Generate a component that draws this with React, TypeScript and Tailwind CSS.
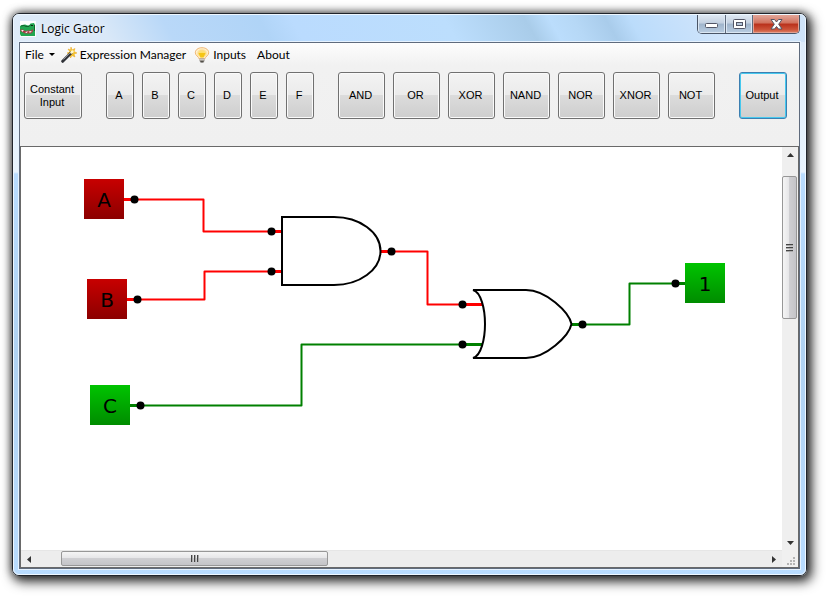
import React from "react";

const inputs = ["A", "B", "C", "D", "E", "F"];
const gates = ["AND", "OR", "XOR", "NAND", "NOR", "XNOR", "NOT"];

function GatorIcon() {
  return (
    <svg width="16" height="16" viewBox="0 0 16 16" className="shrink-0" aria-hidden="true">
      <rect width="16" height="16" fill="#fdfdfd" />
      <path d="M0 5 2 4 5 3.500 8 4.500 9.500 4 10.500 2.500 14 2 15 4V15H1L0 13Z" fill="#22a650" />
      <path d="M1 5 4 4.500 6 5.500 9 5.500 11 3.500M14.500 4V10" stroke="#12602c" fill="none" />
      <path d="M0 8.500 3 8.500 5 10 8 9.500 11 9.500 13 8V10.500L11 12.500 5 12.500 1 10.500Z" fill="#a83c48" />
      <path d="M1.500 9l1 1.500 1-1.500M5.500 11l1 1 1-1.500M9 10.500l1 1 1.500-1.500" fill="#fff" stroke="#fff" strokeWidth=".5" />
      <rect x="11" y="4" width="2" height="1" fill="#0b2a14" />
    </svg>
  );
}

function WandIcon() {
  return (
    <svg width="16" height="16" viewBox="0 0 16 16" className="shrink-0" aria-hidden="true">
      <path d="M10 0 11 3 14 1.500 13 4.500 16 6 13 7 14 10 11 8.500 9.500 11 9 7.500 6 6 9 5 7 2 9.500 3Z" fill="#f6c52c" stroke="#e9a51b" strokeWidth=".5" />
      <path d="M10.500 5.500 1.700 14.300" stroke="#303238" strokeWidth="3" strokeLinecap="round" />
      <path d="M9.500 5.500 2.500 12.500" stroke="#8d929c" strokeWidth="1" />
      <path d="M11.500 4.500 10.500 5.500" stroke="#fff6c9" strokeWidth="2.500" strokeLinecap="round" />
    </svg>
  );
}

function BulbIcon() {
  return (
    <svg width="16" height="16" viewBox="0 0 16 16" className="shrink-0" aria-hidden="true">
      <defs>
        <radialGradient id="bulb" cx=".5" cy=".5" r=".6">
          <stop offset="0" stopColor="#ffe35a" />
          <stop offset=".45" stopColor="#fddc85" />
          <stop offset=".75" stopColor="#fff3d8" />
          <stop offset="1" stopColor="#f4bd78" />
        </radialGradient>
      </defs>
      <path d="M8 .7C3.800.7 1.300 3 1.300 5.800 1.300 8.500 4.500 9.500 5.300 12H10.700C11.500 9.500 14.700 8.500 14.700 5.800 14.700 3 12.200.7 8 .7Z" fill="url(#bulb)" stroke="#efb36c" strokeWidth=".9" />
      <path d="M4.500 6H11.500L9.500 10.500H6.500Z" fill="#f5c514" />
      <path d="M5.500 11.500H10.500V14L9.300 15.500H6.700L5.500 14Z" fill="#8f8c86" />
      <path d="M5.500 12.700H10.500" stroke="#d8d5cf" />
      <path d="M6.500 14.800H9.500" stroke="#37352f" />
    </svg>
  );
}

function WindowButtons() {
  const plain =
    "flex h-full items-center justify-center bg-[linear-gradient(#dfe8f2,#c3d0e0_45%,#9fb4cb_50%,#b9cde2)] shadow-[inset_0_0_0_1px_#dbe7f3]";
  return (
    <div className="flex h-[19px] w-[103px] shrink-0 overflow-hidden rounded-b-[5px] border border-t-0 border-[#4a5567]">
      <button aria-label="Minimize" className={plain + " w-7 border-r border-[#5f6b7d] pt-1"}>
        <svg width="13" height="6" aria-hidden="true">
          <rect x=".5" y=".5" width="12" height="4" rx="1" fill="#fff" stroke="#535666" />
        </svg>
      </button>
      <button aria-label="Maximize" className={plain + " w-[27px] border-r border-[#5f6b7d]"}>
        <svg width="13" height="11" aria-hidden="true">
          <rect x=".5" y=".5" width="12" height="9" rx="1" fill="#fff" stroke="#535666" />
          <rect x="3.500" y="3.500" width="6" height="3" fill="#b5c6da" stroke="#535666" />
        </svg>
      </button>
      <button
        aria-label="Close"
        className="flex h-full flex-1 items-center justify-center bg-[linear-gradient(#e3a89b,#d0705c_45%,#b9301b_50%,#cc5238_80%,#dd8468)] shadow-[inset_0_0_0_1px_#e3a192]"
      >
        <svg width="13" height="11" viewBox="0 0 13 11" aria-hidden="true">
          <path d="M1 .5H4.500L6.500 3 8.500.5H12L8.700 5.200 12 10H8.500L6.500 7.500 4.500 10H1L4.300 5.200Z" fill="#fff" stroke="#535666" strokeWidth="1" />
        </svg>
      </button>
    </div>
  );
}

function ToolButton({ children, size, focused = false }: { children: React.ReactNode; size: string; focused?: boolean }) {
  const edge = focused
    ? "border-[#3c7fb1] shadow-[inset_0_0_0_1px_#46c8ee]"
    : "border-[#707070] shadow-[inset_0_0_0_1px_#fafafa]";
  return (
    <button
      className={
        "h-[47px] shrink-0 rounded-[3px] border bg-[linear-gradient(#f3f3f3,#ebebeb_48%,#dcdcdc_48%,#cecece)] pr-0.5 text-center text-[11px] leading-[13px] " +
        size + " " + edge
      }
    >
      {children}
    </button>
  );
}

function Node({ x, y, on, label }: { x: number; y: number; on: boolean; label: string }) {
  return (
    <g>
      <rect x={x} y={y} width="40" height="40" fill={on ? "url(#green)" : "url(#red)"} />
      <text x={x + 20} y={y + 28} textAnchor="middle" fontSize="20" fontFamily="'DejaVu Sans', sans-serif">
        {label}
      </text>
    </g>
  );
}

const RED = "#ff0000";
const GREEN = "#008000";

const wires = [
  { d: "M113.500 52.500H182.500V84.500H250.500", c: RED },
  { d: "M116.500 152.500H183.500V124.500H250.500", c: RED },
  { d: "M370.500 104.500H406.500V157.500H441.500", c: RED },
  { d: "M119.500 258.500H280.500V197.500H441.500", c: GREEN },
  { d: "M561.500 177.500H608.500V136.500H654.500", c: GREEN },
];

const stubs = [
  { d: "M103 52.500H113M106 152.500H116M250 84.500H261M250 124.500H261M360 104.500H370M441 157.500H462", c: RED },
  { d: "M109 258.500H119M441 197.500H462M551 177.500H561M654 136.500H664", c: GREEN },
];

const dots = [
  [113.5, 52.5], [116.5, 152.5], [119.5, 258.5], [250.5, 84.5], [250.5, 124.5],
  [370.5, 104.5], [441.5, 157.5], [441.5, 197.5], [561.5, 177.5], [654.5, 136.5],
];

function Circuit() {
  return (
    <svg className="block h-full min-h-0 w-full" role="img" aria-label="Logic circuit">
      <defs>
        <linearGradient id="red" x2="0" y2="1">
          <stop stopColor="#c80000" />
          <stop offset="1" stopColor="#8c0000" />
        </linearGradient>
        <linearGradient id="green" x2="0" y2="1">
          <stop stopColor="#00c400" />
          <stop offset="1" stopColor="#008c00" />
        </linearGradient>
      </defs>
      {wires.map((w) => (
        <path key={w.d} d={w.d} stroke={w.c} strokeWidth="2" strokeLinejoin="round" fill="none" />
      ))}
      {stubs.map((s) => (
        <path key={s.d} d={s.d} stroke={s.c} strokeWidth="3" fill="none" />
      ))}
      {dots.map(([x, y]) => (
        <circle key={x + "," + y} cx={x} cy={y} r="4" />
      ))}
      <path d="M261 70H313A46.500 34 0 0 1 313 138H261Z" fill="#fff" stroke="#000" strokeWidth="2" />
      <path
        d="M452 143H505C525 143 548 165 550.500 177 548 189 525 211 505 211H452C460 209 464 192 464 177S460 145 452 143Z"
        fill="#fff"
        stroke="#000"
        strokeWidth="2"
        strokeLinejoin="bevel"
      />
      <Node x={63} y={32} on={false} label="A" />
      <Node x={66} y={132} on={false} label="B" />
      <Node x={69} y={238} on label="C" />
      <Node x={664} y={116} on label="1" />
    </svg>
  );
}

function Arrow({ points, label }: { points: string; label: string }) {
  return (
    <button aria-label={label} className="flex size-4 shrink-0 items-center justify-center">
      <svg width="7" height="7" aria-hidden="true">
        <polygon points={points} fill="#333" />
      </svg>
    </button>
  );
}

export default function App() {
  return (
    <div className="flex h-screen min-h-[400px] flex-col bg-white pt-[13px] pr-[22px] pb-5 pl-3 font-['Liberation_Sans',Arial,sans-serif] text-black">
      <div className="flex min-h-0 flex-1 flex-col rounded-[7px] border border-[#20242b] bg-[linear-gradient(#dbeaf9,#e9f4fe_158px,#b9dcff_160px,#b0d2f2_60%,#b9dcff)] shadow-[0_0_8px_rgba(0,0,0,0.6),3px_4px_12px_2px_rgba(0,0,0,0.75)]">
        <div className="flex min-h-0 flex-1 flex-col rounded-[6px] border border-[#eef7ff] px-[5px] pb-[5px]">
          <header className="-mx-[5px] flex h-[27px] shrink-0 items-start rounded-t-[5px] bg-[linear-gradient(60deg,#dfebf8_0%,#d9e8f8_12%,#b9d8f8_20%,#b0d4f7_32%,#badbfe_36%,#bcdefd_55%,#a9cce9_65%,#bbddfc_68%,#b6d8f6_71%,#a9cceb_75%,#bbdcfb_78%,#cfe4fb_88%,#cfe3f8_100%)] pr-[5px] pl-1.5">
            <div className="flex flex-1 items-center gap-[5px] pt-[6px]">
              <GatorIcon />
              <h1 className="font-['Open_Sans','Noto_Sans',sans-serif] text-[12px] leading-4 text-shadow-[0_0_8px_#ffffff]">Logic Gator</h1>
            </div>
            <WindowButtons />
          </header>

          <main className="flex min-h-0 flex-1 flex-col border border-[#5f6b7d] bg-[#f0f0f0] outline outline-[#e6f2fe]">
            <nav className="flex h-[23px] shrink-0 items-center bg-[linear-gradient(#fdfdfd,#f1f1f1)] pl-[5px] font-[Lato,'Noto_Sans',sans-serif] text-[12px] leading-4">
              <button className="flex items-center gap-[5px]">
                File
                <svg width="6" height="3" viewBox="0 0 6 3" aria-hidden="true">
                  <path d="M0 0H6L3 3Z" />
                </svg>
              </button>
              <button className="ml-1.5 flex items-center gap-[3px]">
                <WandIcon />
                Expression Manager
              </button>
              <button className="ml-2 flex items-center gap-[3px]">
                <BulbIcon />
                Inputs
              </button>
              <button className="ml-[11px]">About</button>
            </nav>

            <div className="flex h-20 shrink-0 gap-6 overflow-hidden bg-[linear-gradient(#f1f1f1,#f0f0f0)] pt-1.5 pl-1">
              <ToolButton size="w-[58px]">
                Constant
                <br />
                Input
              </ToolButton>
              <div className="flex gap-2">
                {inputs.map((name) => (
                  <ToolButton key={name} size="w-7">
                    {name}
                  </ToolButton>
                ))}
              </div>
              <div className="flex gap-2">
                {gates.map((name) => (
                  <ToolButton key={name} size="w-[47px]">
                    {name}
                  </ToolButton>
                ))}
              </div>
              <ToolButton size="w-12" focused>
                Output
              </ToolButton>
            </div>

            <section className="grid min-h-0 flex-1 grid-cols-[minmax(0,1fr)_16px] grid-rows-[minmax(0,1fr)_17px] border border-[#696969] bg-[#f0f0f0]">
              <div className="min-h-0 bg-white">
                <Circuit />
              </div>
              <div className="flex flex-col bg-[#efefef]">
                <Arrow label="Scroll up" points="0,5 3.500,1 7,5" />
                <div className="flex-1 pt-[13px]">
                  <div className="flex h-[143px] w-[15px] flex-col items-center justify-center gap-px rounded-[2px] border border-[#979797] bg-[linear-gradient(90deg,#f5f5f5,#e6e6e8_45%,#cfcfd2_50%,#c4c4c8)]">
                    <i className="h-0.5 w-[7px] border-t border-[#444] bg-[#aaa]" />
                    <i className="h-0.5 w-[7px] border-t border-[#444] bg-[#aaa]" />
                    <i className="h-0.5 w-[7px] border-t border-[#444] bg-[#aaa]" />
                  </div>
                </div>
                <Arrow label="Scroll down" points="0,2 7,2 3.500,6" />
              </div>
              <div className="flex border-t border-[#e6e6e6] bg-[#ededed]">
                <Arrow label="Scroll left" points="5,0 5,7 1,3.500" />
                <div className="flex-1 pl-6">
                  <div className="flex h-[15px] w-[267px] items-center justify-center gap-px rounded-[2px] border border-[#979797] bg-[linear-gradient(#f5f5f5,#e6e6e8_45%,#cfcfd2_50%,#c4c4c8)]">
                    <i className="h-[7px] w-0.5 border-l border-[#444] bg-[#aaa]" />
                    <i className="h-[7px] w-0.5 border-l border-[#444] bg-[#aaa]" />
                    <i className="h-[7px] w-0.5 border-l border-[#444] bg-[#aaa]" />
                  </div>
                </div>
                <Arrow label="Scroll right" points="1,0 5,3.500 1,7" />
              </div>
              <div className="flex items-end justify-end pr-[3px] pb-[2px]">
                <svg width="8" height="8" fill="#b4b4b4" aria-hidden="true">
                  <path d="M6 0h2v2h-2zM3 3h2v2h-2zM6 3h2v2h-2zM0 6h2v2h-2zM3 6h2v2h-2zM6 6h2v2h-2z" />
                </svg>
              </div>
            </section>
          </main>
        </div>
      </div>
    </div>
  );
}
